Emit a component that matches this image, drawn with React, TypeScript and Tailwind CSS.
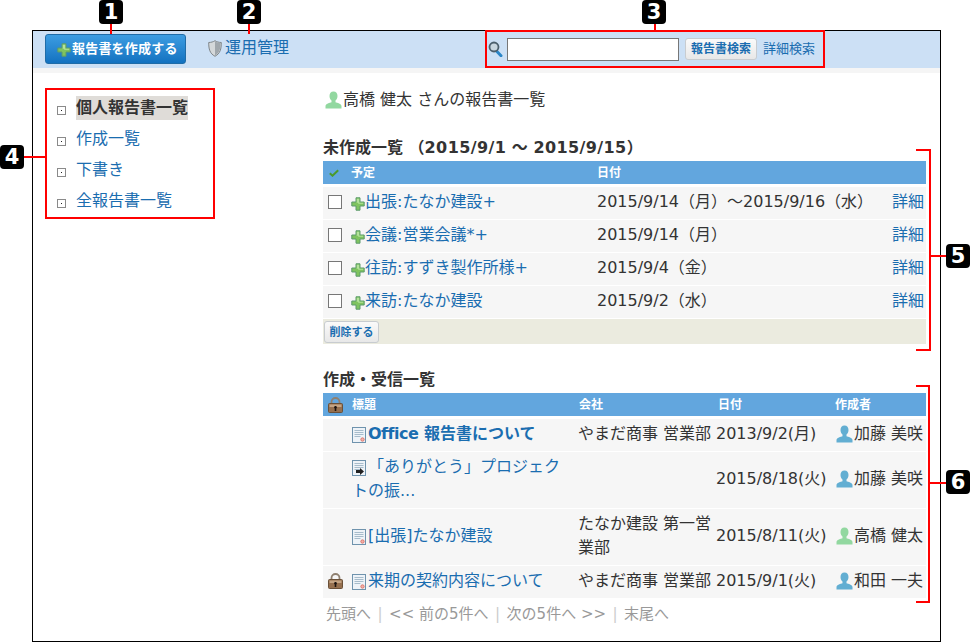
import React from "react";

const link = "text-[#1a6db0]";

function Plus({ className = "" }: { className?: string }) {
  return (
    <svg viewBox="0 0 14 14" className={`w-[14px] h-[14px] shrink-0 ${className}`}>
      <path d="M5 .8h4v4.200h4.200v4H9v4.200H5V9H.8V5H5z" fill="#7fc45f" stroke="#5d9a6d" strokeWidth="1" />
      <path d="M5.800 1.800h2.400v4h4v1H7.200v-1h-1.400z" fill="#b5e29c" />
    </svg>
  );
}
function Person({ color, className = "" }: { color: string; className?: string }) {
  return (
    <svg viewBox="0 0 17 18" className={`w-[17px] h-[18px] shrink-0 ${className}`}>
      <path
        d="M8.500 .5c2.600 0 4 2 4 4.400 0 2-.9 3.800-2 4.700v1.600c1.600.7 6 1.300 6 4v2.300H.5v-2.300c0-2.700 4.400-3.300 6-4v-1.600c-1.100-.9-2-2.700-2-4.700 0-2.400 1.400-4.400 4-4.400z"
        fill={color}
      />
    </svg>
  );
}
function Doc({ arrow = false }: { arrow?: boolean }) {
  return (
    <svg viewBox="0 0 14 16" className="w-[14px] h-[16px] shrink-0">
      <rect x=".5" y=".5" width="13" height="15" fill="#eef3f8" stroke="#6f93ad" />
      <path d="M2.500 3.500h9M2.500 5.500h9M2.500 7.500h9M2.500 9.500h6" stroke="#a7bccb" strokeWidth="1" />
      {arrow ? (
        <path d="M4 10h4V8l4 3.500-4 3.500v-2H4z" fill="#222" />
      ) : (
        <circle cx="10.500" cy="12.500" r="1.700" fill="#f3b0a8" stroke="#d9695e" strokeWidth=".8" />
      )}
    </svg>
  );
}
function Lock() {
  return (
    <svg viewBox="0 0 15 16" className="w-[15px] h-[16px] shrink-0">
      <path d="M3.500 7V5a4 4 0 0 1 8 0v2" fill="none" stroke="#8f8070" strokeWidth="1.800" />
      <rect x=".5" y="6.500" width="14" height="9" rx="1" fill="#96704f" stroke="#6a5038" />
      <rect x="1.500" y="7.500" width="12" height="2.500" fill="#c4a484" />
      <path d="M7.500 9a1.300 1.300 0 0 1 .8 2.400V14H6.700v-2.600A1.300 1.300 0 0 1 7.500 9z" fill="#1c1410" />
    </svg>
  );
}
function Shield() {
  return (
    <svg viewBox="0 0 14 17" className="w-[14px] h-[17px] shrink-0">
      <path d="M7 .7c1.800 1.200 3.800 1.700 6.300 1.800 0 6.500-1 11-6.300 13.800C1.700 13.500.7 9 .7 2.500 3.200 2.400 5.200 1.900 7 .7z" fill="#d4d8da" stroke="#7e8589" strokeWidth="1" />
      <path d="M7 1.500v14c4.500-2.700 5.500-6.500 5.600-12.500C10.500 2.800 8.600 2.400 7 1.500z" fill="#a0a7ac" />
    </svg>
  );
}
function Search() {
  return (
    <svg viewBox="0 0 15 16" className="w-[15px] h-[16px] shrink-0">
      <path d="M8.500 10l4.500 4.700" stroke="#2a86c8" strokeWidth="3" strokeLinecap="round" />
      <circle cx="6" cy="6" r="4.500" fill="#c8d6e0" stroke="#4b5f6d" strokeWidth="1.800" />
    </svg>
  );
}
function Check() {
  return (
    <svg viewBox="0 0 10 8" className="w-[10px] h-[8px] shrink-0">
      <path d="M.8 4.300l2.700 2.400L9.200 1.200" fill="none" stroke="#4b9a2a" strokeWidth="2" />
    </svg>
  );
}
function Bullet() {
  return (
    <span className="w-[9px] h-[9px] mt-[5px] border border-[#8a8a8a] flex items-center justify-center shrink-0">
      <span className="w-px h-px bg-[#222]" />
    </span>
  );
}

function Badge({ n, className, line }: { n: number; className: string; line: string }) {
  return (
    <>
      <div className={`absolute w-6 h-6 rounded-[4px] bg-black text-white flex items-center justify-center text-[21px] leading-none font-bold font-['DejaVu_Sans',sans-serif] ${className}`}>
        {n}
      </div>
      <div className={`absolute bg-[#ff0000] ${line}`} />
    </>
  );
}

const pending = [
  ["出張:たなか建設+", "2015/9/14（月）～2015/9/16（水）"],
  ["会議:営業会議*+", "2015/9/14（月）"],
  ["往訪:すずき製作所様+", "2015/9/4（金）"],
  ["来訪:たなか建設", "2015/9/2（水）"],
];

const reports = [
  { lock: false, arrow: false, bold: true, title: "", co: "やまだ商事 営業部", date: "2013/9/2(月)", who: "加藤 美咲", color: "#62aed2", h: "h-[32px]" },
  { lock: false, arrow: true, bold: false, title: "「ありがとう」プロジェクトの振...", co: "", date: "2015/8/18(火)", who: "加藤 美咲", color: "#62aed2", h: "h-[56px]" },
  { lock: false, arrow: false, bold: false, title: "[出張]たなか建設", co: "たなか建設 第一営業部", date: "2015/8/11(火)", who: "高橋 健太", color: "#92d8a0", h: "h-[56px]" },
  { lock: true, arrow: false, bold: false, title: "来期の契約内容について", co: "やまだ商事 営業部", date: "2015/9/1(火)", who: "和田 一夫", color: "#62aed2", h: "h-[32px]" },
];

export default function App() {
  return (
    <div className="relative w-[970px] h-[642px] bg-white overflow-hidden pl-[32px] pt-[30px] font-['DejaVu_Sans','Noto_Sans_CJK_JP',sans-serif] text-[16px] leading-[24px] text-[#333333]">
      <div className="w-[909px] h-[612px] border border-black">
        {/* Toolbar */}
        <div className="h-[37px] bg-[#cce0f5] flex items-start">
          <button className="ml-[12px] mt-[3px] w-[141px] h-[30px] rounded-[3px] border border-[#1f6ca8] bg-gradient-to-b from-[#3c9de2] to-[#1272c0] text-white text-[13px] font-bold flex items-center pl-[11px] gap-px">
            <Plus className="mt-[2px]" />
            <span className="tracking-[0.2px]">報告書を作成する</span>
          </button>
          <a className={`ml-[22px] mt-[5px] flex items-center gap-[3px] ${link}`}>
            <Shield />
            <span>運用管理</span>
          </a>
          <div className="ml-[199px] mt-[6px] flex items-center">
            <Search />
            <input className="ml-[4px] w-[172px] h-[23px] border border-[#777] bg-white" />
            <button className={`ml-[6px] w-[72px] h-[22px] rounded-[3px] border border-[#c8ccd0] bg-gradient-to-b from-[#fafafa] to-[#e8e8e8] text-[12px] font-bold leading-none ${link}`}>
              報告書検索
            </button>
            <a className={`ml-[6px] text-[13px] ${link}`}>詳細検索</a>
          </div>
        </div>
        <div className="h-[5px] bg-[#f5f5f5]" />

        {/* Body */}
        <div className="flex">
          <nav className="w-[290px] pl-[24px] pt-[19px] flex flex-col">
            {["個人報告書一覧", "作成一覧", "下書き", "全報告書一覧"].map((t, i) => (
              <div key={t} className="h-[31px] flex items-center gap-[10px]">
                <Bullet />
                <span className={i === 0 ? "bg-[#dfdcd8] font-bold text-[#333]" : link}>{t}</span>
              </div>
            ))}
          </nav>

          <main className="w-[603px]">
            <div className="mt-[15px] h-[24px] flex items-center pl-[2px] gap-[1px]">
              <Person color="#92d8a0" />
              <span>高橋 健太 さんの報告書一覧</span>
            </div>

            <h2 className="mt-[24px] h-[24px] font-bold">
              未作成一覧 （<span className="tracking-[0.4px]">2015/9/1</span> ～ <span className="tracking-[0.4px]">2015/9/15</span>）
            </h2>
            <div className="mt-[1px] h-[23px] bg-[#62a6de] flex items-center text-white text-[12px] font-bold">
              <div className="w-[24px] pl-[6px] flex"><Check /></div>
              <div className="w-[246px] pl-[4px]">予定</div>
              <div className="pl-[4px]">日付</div>
            </div>
            <div className="mt-[3px] flex flex-col gap-px">
              {pending.map(([t, d]) => (
                <div key={t} className="h-[32px] bg-[#f6f6f6] flex items-center pb-[2px]">
                  <div className="w-[24px] pl-[5px] flex">
                    <span className="w-[14px] h-[14px] border border-[#777] bg-white" />
                  </div>
                  <div className="w-[246px] pl-[4px] flex items-center">
                    <Plus className="mt-[4px]" />
                    <span className={link}>{t}</span>
                  </div>
                  <div className="w-[295px] pl-[4px]">{d}</div>
                  <div className={`pl-[4px] ${link}`}>詳細</div>
                </div>
              ))}
            </div>
            <div className="mt-px h-[25px] bg-[#ebebdf] flex items-start pl-px pt-[2px]">
              <button className={`w-[55px] h-[22px] rounded-[3px] border border-[#c8ccd0] bg-gradient-to-b from-[#fafafa] to-[#e8e8e8] text-[11px] font-bold leading-none ${link}`}>
                削除する
              </button>
            </div>

            <h2 className="mt-[24px] h-[24px] font-bold">作成・受信一覧</h2>
            <div className="mt-px h-[23px] bg-[#62a6de] flex items-center text-white text-[12px] font-bold">
              <div className="w-[25px] pl-[5px] flex"><Lock /></div>
              <div className="w-[227px] pl-[4px]">標題</div>
              <div className="w-[139px] pl-[4px]">会社</div>
              <div className="w-[119px] pl-[4px]">日付</div>
              <div className="pl-[2px]">作成者</div>
            </div>
            <div className="mt-[3px] flex flex-col gap-px">
              {reports.map((r) => (
                <div key={r.date} className={`${r.h} bg-[#f6f6f6] flex items-center pb-[2px]`}>
                  <div className="w-[25px] pl-[5px] flex">{r.lock && <Lock />}</div>
                  <div className={`w-[227px] pl-[4px] pr-[12px] ${link} ${r.bold ? "font-bold" : ""}`}>
                    <span className="inline-block align-[-4px] mr-[2px]"><Doc arrow={r.arrow} /></span>
                    {r.bold ? (
                      <>
                        <span className="tracking-[-0.5px]">Office</span> 報告書について
                      </>
                    ) : (
                      r.title
                    )}
                  </div>
                  <div className="w-[139px] pl-[3px]">{r.co}</div>
                  <div className="w-[119px] pl-[2px]">{r.date}</div>
                  <div className="flex-1 pl-[3px] flex items-center gap-px whitespace-nowrap">
                    <Person color={r.color} />
                    <span>{r.who}</span>
                  </div>
                </div>
              ))}
            </div>
            <div className="mt-[4px] pl-[3px] text-[15px] text-[#999999] flex items-center h-[24px] gap-[6.5px]">
              <span>先頭へ</span>
              <span className="text-[#cccccc]">|</span>
              <span>&lt;&lt; 前の5件へ</span>
              <span className="text-[#cccccc]">|</span>
              <span>次の5件へ &gt;&gt;</span>
              <span className="text-[#cccccc]">|</span>
              <span>末尾へ</span>
            </div>
          </main>
        </div>
      </div>

      {/* Callouts */}
      <div className="absolute left-[485px] top-[30px] w-[340px] h-[38px] border-2 border-[#ff0000]" />
      <div className="absolute left-[45px] top-[88px] w-[170px] h-[131px] border-2 border-[#ff0000]" />
      <div className="absolute left-[916px] top-[149px] w-[15px] h-[202px] border-y-2 border-r-2 border-[#ff0000]" />
      <div className="absolute left-[916px] top-[385px] w-[14px] h-[218px] border-y-2 border-r-2 border-[#ff0000]" />
      <Badge n={1} className="left-[99px] top-0" line="left-[110px] top-[24px] w-[2px] h-[10px]" />
      <Badge n={2} className="left-[237px] top-0" line="left-[248px] top-[24px] w-[2px] h-[10px]" />
      <Badge n={3} className="left-[642px] top-0" line="left-[654px] top-[24px] w-[2px] h-[6px]" />
      <Badge n={4} className="left-0 top-[145px]" line="left-[24px] top-[156px] w-[21px] h-[2px]" />
      <Badge n={5} className="left-[946px] top-[244px]" line="left-[931px] top-[255px] w-[15px] h-[2px]" />
      <Badge n={6} className="left-[946px] top-[470px]" line="left-[930px] top-[482px] w-[16px] h-[2px]" />
    </div>
  );
}
